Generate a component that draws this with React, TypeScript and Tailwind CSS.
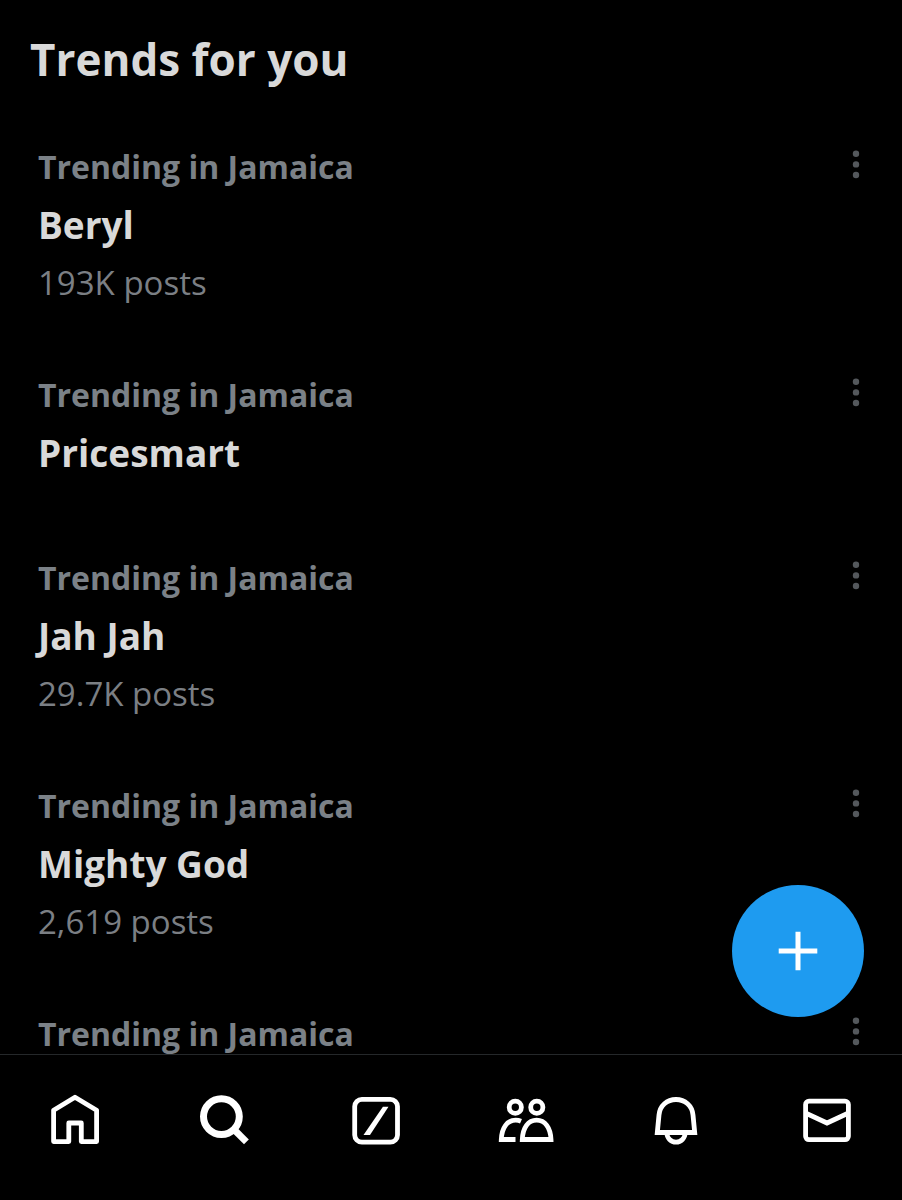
import type { ReactNode } from "react";

type Trend = {
  id: number;
  name?: string;
  posts?: string;
};

const trends: Trend[] = [
  { id: 1, name: "Beryl", posts: "193K posts" },
  { id: 2, name: "Pricesmart" },
  { id: 3, name: "Jah Jah", posts: "29.7K posts" },
  { id: 4, name: "Mighty God", posts: "2,619 posts" },
  { id: 5 },
];

const Icon = ({ children }: { children: ReactNode }) => (
  <svg viewBox="0 0 56 56" className="size-14" fill="none" stroke="currentColor" strokeWidth="4.8" aria-hidden="true">
    {children}
  </svg>
);

const navItems = [
  {
    label: "Home",
    icon: (
      <path d="M28 5.2 49.6 18.3V49.6H34.3V31H21.8V49.6H6.6V18.3Z" strokeLinejoin="round" />
    ),
  },
  {
    label: "Search",
    icon: (
      <>
        <circle cx="24.4" cy="24.6" r="17.9" strokeWidth="7" />
        <path d="M36 36.5 49.4 49.8" strokeWidth="6.8" />
      </>
    ),
  },
  {
    label: "Grok",
    icon: (
      <>
        <rect x="6.7" y="7.4" width="42.8" height="42.8" rx="7.2" />
        <path d="M34.9 14.7H40.5L22 43H15.5Z" fill="currentColor" stroke="none" />
      </>
    ),
  },
  {
    label: "Communities",
    icon: (
      <>
        <circle cx="17.3" cy="15.2" r="6.1" />
        <circle cx="38.8" cy="15.2" r="6.1" />
        <path d="M24.3 47.5H53C52.5 35.5 47 28.2 38.6 28.2S24.8 35.5 24.3 47.5Z" />
        <path d="M17.5 47.5H3.3C3.8 35.5 9.3 28.2 17.7 28.2C19.6 28.2 21.4 28.6 23 29.3" />
      </>
    ),
  },
  {
    label: "Notifications",
    icon: (
      <>
        <path d="M9.3 40.5 11 23C11.8 13.5 19 7.5 28 7.5S44.2 13.5 45 23L46.7 40.5Z" />
        <path d="M18.9 41A9.1 9.1 0 0 0 37.1 41" />
      </>
    ),
  },
  {
    label: "Messages",
    icon: (
      <>
        <rect x="6.6" y="9.1" width="42.8" height="38.6" rx="3.4" />
        <path d="M7 21.3 28 31 49 21.3" />
      </>
    ),
  },
];

const TrendItem = ({ trend }: { trend: Trend }) => (
  <li className="flex items-start justify-between pt-8 pb-[35px] pl-[38px] pr-[31px]">
    <div>
      <p className="text-[32px] leading-[45px] font-bold text-[#7b8187]">Trending in Jamaica</p>
      {trend.name && <h2 className="text-[37px] leading-[71px] font-bold text-[#d9d9d9]">{trend.name}</h2>}
      {trend.posts && <p className="text-[33px] leading-[45px] text-[#7b7f84]">{trend.posts}</p>}
    </div>
    <button type="button" aria-label="More options" className="text-[#54585c]">
      <svg viewBox="0 0 30 42" className="h-[42px] w-[30px]" fill="currentColor" aria-hidden="true">
        <circle cx="15" cy="9.7" r="3.2" />
        <circle cx="15" cy="20.4" r="3.2" />
        <circle cx="15" cy="31" r="3.2" />
      </svg>
    </button>
  </li>
);

export default function App() {
  return (
    <div className="flex h-screen flex-col bg-black font-['Open_Sans',sans-serif]">
      <main className="relative min-h-0 flex-1 overflow-hidden">
        <h1 className="px-[30px] pt-[27px] pb-[21px] text-[44px] leading-[64px] font-bold text-[#d9d9d9]">
          Trends for you
        </h1>
        <ul>
          {trends.map((trend) => (
            <TrendItem key={trend.id} trend={trend} />
          ))}
        </ul>
        <button
          type="button"
          aria-label="New post"
          className="absolute right-[38px] bottom-[37px] flex size-[132px] items-center justify-center rounded-full bg-[#1e9bf0] text-white"
        >
          <svg viewBox="0 0 40 40" className="size-10" fill="none" stroke="currentColor" strokeWidth="5" aria-hidden="true">
            <path d="M20 .7V39.3M.7 20H39.3" />
          </svg>
        </button>
      </main>
      <nav className="grid grid-cols-6 border-t border-[#25282a] pt-[37px] pb-[52px] text-white">
        {navItems.map((item) => (
          <a key={item.label} href="#" aria-label={item.label} className="flex justify-center">
            <Icon>{item.icon}</Icon>
          </a>
        ))}
      </nav>
    </div>
  );
}
